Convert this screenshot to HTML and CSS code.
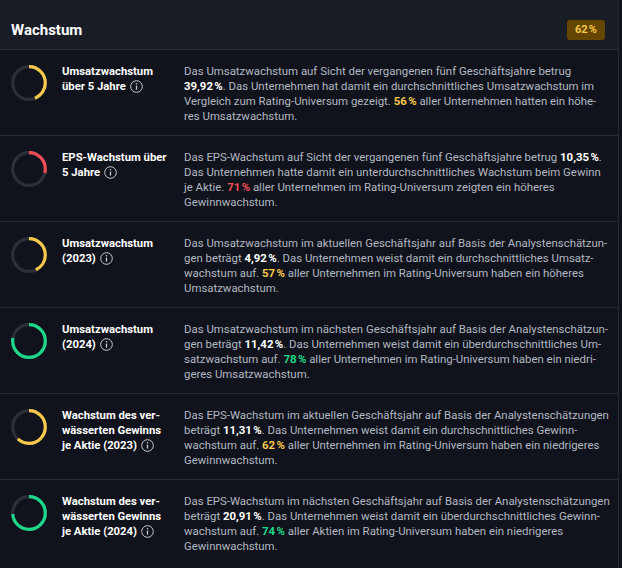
FILE: index.html
```html
<!DOCTYPE html>
<html lang="de">
<head>
<meta charset="utf-8">
<link rel="stylesheet" href="styles.css">
</head>
<body>
<div class="panel">
  <header class="head">
    <h2 class="head-title">Wachstum</h2>
    <span class="badge">62&#8239;%</span>
  </header>

  <div class="row">
    <svg class="ring" viewBox="0 0 36 36"><circle class="track" cx="18" cy="18" r="16.3"/><circle class="arc yellow" cx="18" cy="18" r="16.3" pathLength="100" stroke-dasharray="44 100"/></svg>
    <div class="label">Umsatzwachstum über 5&nbsp;Jahre&nbsp;<svg class="info" viewBox="0 0 13 13"><circle cx="6.5" cy="6.5" r="5.8"/><line x1="6.5" y1="5.6" x2="6.5" y2="9.6"/><circle class="dot" cx="6.5" cy="3.8" r="0.8"/></svg></div>
    <p class="desc">Das Umsatzwachstum auf Sicht der vergangenen fünf Geschäftsjahre betrug <b class="val">39,92&#8239;%</b>. Das Unternehmen hat damit ein durchschnittliches Umsatzwachstum im Vergleich zum Rating-Universum gezeigt. <b class="c-yellow">56&#8239;%</b> aller Unternehmen hatten ein höhe-<br>res Umsatzwachstum.</p>
  </div>

  <div class="row">
    <svg class="ring" viewBox="0 0 36 36"><circle class="track" cx="18" cy="18" r="16.3"/><circle class="arc red" cx="18" cy="18" r="16.3" pathLength="100" stroke-dasharray="29 100"/></svg>
    <div class="label">EPS-Wachstum über 5&nbsp;Jahre&nbsp;<svg class="info" viewBox="0 0 13 13"><circle cx="6.5" cy="6.5" r="5.8"/><line x1="6.5" y1="5.6" x2="6.5" y2="9.6"/><circle class="dot" cx="6.5" cy="3.8" r="0.8"/></svg></div>
    <p class="desc">Das EPS-Wachstum auf Sicht der vergangenen fünf Geschäftsjahre betrug <b class="val">10,35&#8239;%</b>. Das Unternehmen hatte damit ein unterdurchschnittliches Wachstum beim Gewinn je Aktie. <b class="c-red">71&#8239;%</b> aller Unternehmen im Rating-Universum zeigten ein höheres Gewinnwachstum.</p>
  </div>

  <div class="row">
    <svg class="ring" viewBox="0 0 36 36"><circle class="track" cx="18" cy="18" r="16.3"/><circle class="arc yellow" cx="18" cy="18" r="16.3" pathLength="100" stroke-dasharray="43 100"/></svg>
    <div class="label">Umsatzwachstum (2023)&nbsp;<svg class="info" viewBox="0 0 13 13"><circle cx="6.5" cy="6.5" r="5.8"/><line x1="6.5" y1="5.6" x2="6.5" y2="9.6"/><circle class="dot" cx="6.5" cy="3.8" r="0.8"/></svg></div>
    <p class="desc">Das Umsatzwachstum im aktuellen Geschäftsjahr auf Basis der Analystenschät&shy;zun&shy;gen beträgt <b class="val">4,92&#8239;%</b>. Das Unternehmen weist damit ein durchschnittliches Umsatz&shy;wachstum auf. <b class="c-yellow">57&#8239;%</b> aller Unternehmen im Rating-Universum haben ein höheres Umsatzwachstum.</p>
  </div>

  <div class="row">
    <svg class="ring" viewBox="0 0 36 36"><circle class="track" cx="18" cy="18" r="16.3"/><circle class="arc green" cx="18" cy="18" r="16.3" pathLength="100" stroke-dasharray="78 100"/></svg>
    <div class="label">Umsatzwachstum (2024)&nbsp;<svg class="info" viewBox="0 0 13 13"><circle cx="6.5" cy="6.5" r="5.8"/><line x1="6.5" y1="5.6" x2="6.5" y2="9.6"/><circle class="dot" cx="6.5" cy="3.8" r="0.8"/></svg></div>
    <p class="desc">Das Umsatzwachstum im nächsten Geschäftsjahr auf Basis der Analystenschätzun&shy;gen beträgt <b class="val">11,42&#8239;%</b>. Das Unternehmen weist damit ein überdurchschnittliches Um&shy;satzwachstum auf. <b class="c-green">78&#8239;%</b> aller Unternehmen im Rating-Universum haben ein niedri&shy;geres Umsatzwachstum.</p>
  </div>

  <div class="row">
    <svg class="ring" viewBox="0 0 36 36"><circle class="track" cx="18" cy="18" r="16.3"/><circle class="arc yellow" cx="18" cy="18" r="16.3" pathLength="100" stroke-dasharray="62 100"/></svg>
    <div class="label">Wachstum des ver&shy;wässerten Gewinns je Aktie (2023)&nbsp;<svg class="info" viewBox="0 0 13 13"><circle cx="6.5" cy="6.5" r="5.8"/><line x1="6.5" y1="5.6" x2="6.5" y2="9.6"/><circle class="dot" cx="6.5" cy="3.8" r="0.8"/></svg></div>
    <p class="desc">Das EPS-Wachstum im aktuellen Geschäftsjahr auf Basis der Analystenschätzungen beträgt <b class="val">11,31&#8239;%</b>. Das Unternehmen weist damit ein durchschnittliches Gewinn&shy;wachstum auf. <b class="c-yellow">62&#8239;%</b> aller Unternehmen im Rating-Universum haben ein niedrigeres Gewinnwachstum.</p>
  </div>

  <div class="row">
    <svg class="ring" viewBox="0 0 36 36"><circle class="track" cx="18" cy="18" r="16.3"/><circle class="arc green" cx="18" cy="18" r="16.3" pathLength="100" stroke-dasharray="74 100"/></svg>
    <div class="label">Wachstum des ver&shy;wässerten Gewinns je Aktie (2024)&nbsp;<svg class="info" viewBox="0 0 13 13"><circle cx="6.5" cy="6.5" r="5.8"/><line x1="6.5" y1="5.6" x2="6.5" y2="9.6"/><circle class="dot" cx="6.5" cy="3.8" r="0.8"/></svg></div>
    <p class="desc">Das EPS-Wachstum im nächsten Geschäftsjahr auf Basis der Analystenschätzungen beträgt <b class="val">20,91&#8239;%</b>. Das Unternehmen weist damit ein überdurchschnittliches Gewinn&shy;wachstum auf. <b class="c-green">74&#8239;%</b> aller Aktien im Rating-Universum haben ein niedrigeres Gewinnwachstum.</p>
  </div>
</div>
</body>
</html>
```

FILE: styles.css
```css
* { box-sizing: border-box; }
html, body { margin: 0; padding: 0; background: #10131b; }
body { font-family: Roboto, "Liberation Sans", sans-serif; }

.panel {
  width: 619px;
  background: #10131b;
  border-right: 1px solid #262a33;
  min-height: 568px;
}

.head {
  height: 50px;
  background: #181d26;
  border-bottom: 1px solid #2a2e37;
  display: flex;
  align-items: center;
  justify-content: space-between;
  padding: 10px 13px 0 11px;
}
.head-title {
  margin: 0;
  font-size: 15px;
  font-weight: 700;
  color: #ffffff;
}
.badge {
  background: #654600;
  color: #f7c64a;
  font-size: 11px;
  font-weight: 700;
  padding: 3px 8px;
  border-radius: 3px;
  line-height: 14px;
}

.row {
  display: grid;
  grid-template-columns: 51px 122px 1fr;
  align-items: start;
  padding: 14px 6px 11px 11px;
  border-bottom: 1px solid #262a33;
  min-height: 86px;
}
.row:last-child { border-bottom: none; }

.ring { width: 36px; height: 36px; margin-top: 1px; transform: rotate(-90deg); }
.ring circle { fill: none; stroke-width: 3.2; }
.ring .track { stroke: #2c2f37; }
.arc.yellow { stroke: #f8c94b; }
.arc.red { stroke: #f24c57; }
.arc.green { stroke: #1cd88a; }

.label {
  margin-right: 12px;
  color: #ffffff;
  font-size: 11.3px;
  font-weight: 700;
  line-height: 15px;
  hyphens: manual;
}
.info { width: 13px; height: 13px; vertical-align: -3px; margin-left: 1px; }
.info circle { fill: none; stroke: #c9ccd2; stroke-width: 1; }
.info line { stroke: #c9ccd2; stroke-width: 1.3; }
.info .dot { fill: #c9ccd2; stroke: none; }

.desc {
  margin: 0;
  color: #b3b8c2;
  font-size: 11.4px;
  line-height: 15px;
  hyphens: manual;
}
.desc b { font-weight: 700; }
.val { color: #ffffff; }
.c-yellow { color: #f8c94b; }
.c-red { color: #f24c57; }
.c-green { color: #1cd88a; }
```
